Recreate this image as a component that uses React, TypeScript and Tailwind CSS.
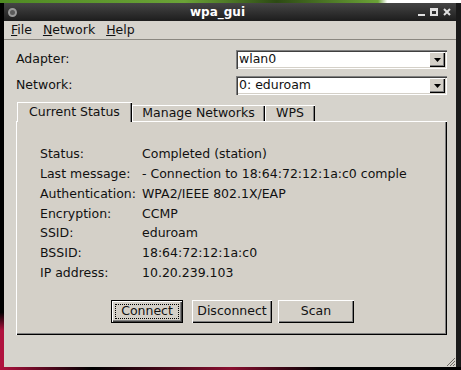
import { ReactNode } from "react";

const font = "font-['DejaVu_Sans','Liberation_Sans',sans-serif]";

const raised =
  "shadow-[inset_1px_1px_0_#ffffff,inset_-1px_-1px_0_#000000,inset_-2px_-2px_0_#808080]";
const sunken =
  "shadow-[inset_1px_1px_0_#808080,inset_2px_2px_0_#404040,inset_-1px_-1px_0_#ffffff,inset_-2px_-2px_0_#d4d0c8]";

const rows = [
  ["Status:", "Completed (station)"],
  ["Last message:", "- Connection to 18:64:72:12:1a:c0 comple"],
  ["Authentication:", "WPA2/IEEE 802.1X/EAP"],
  ["Encryption:", "CCMP"],
  ["SSID:", "eduroam"],
  ["BSSID:", "18:64:72:12:1a:c0"],
  ["IP address:", "10.20.239.103"],
];

function Combo({ value }: { value: string }) {
  return (
    <div className={`flex h-[19px] w-[211px] items-center bg-white p-[2px] ${sunken}`}>
      <span className="flex-1 pl-[1px] leading-none">{value}</span>
      <div className={`flex h-[15px] w-[16px] items-center justify-center bg-[#d4d0c8] ${raised}`}>
        <svg width="7" height="4" viewBox="0 0 7 4">
          <path d="M0 0h7L3.5 4z" fill="#000" />
        </svg>
      </div>
    </div>
  );
}

function Button({ children, w, main }: { children: ReactNode; w: string; main?: boolean }) {
  return (
    <div
      className={`flex h-[23px] ${w} items-center justify-center bg-[#d4d0c8] ${
        main
          ? "shadow-[inset_0_0_0_1px_#000,inset_2px_2px_0_#fff,inset_-2px_-2px_0_#404040,inset_-3px_-3px_0_#808080]"
          : raised
      }`}
    >
      {main ? (
        <span className="flex h-[15px] w-[64px] items-center justify-center border border-dotted border-black">
          {children}
        </span>
      ) : (
        children
      )}
    </div>
  );
}

function Tab({ label, active, w }: { label: string; active?: boolean; w: string }) {
  return (
    <div
      className={`flex ${w} items-center justify-center bg-[#d4d0c8] shadow-[inset_1px_1px_0_#ffffff,inset_-1px_0_0_#000000,inset_-2px_0_0_#808080] ${
        active ? "h-[20px] -mb-[1px] relative z-10" : "h-[16px]"
      }`}
    >
      {label}
    </div>
  );
}

export default function App() {
  return (
    <div className={`flex h-[370px] w-[461px] flex-col overflow-hidden bg-black text-[12.5px] text-[#111] ${font}`}>
      <div className="h-[3px] w-full bg-[linear-gradient(90deg,#4f8a23_0%,#6ba337_40%,#2d4a14_60%,#6ba337_82%,#ffffff_84%)]" />
      <div className="flex flex-1">
        <div className="w-[4px] bg-[linear-gradient(180deg,#000_0%,#000_85%,#b0123e_90%)]" />
        <div className="flex h-[364px] w-[452px] flex-col bg-[#d6d3cc]">
          {/* title bar */}
          <div className="flex h-[18px] items-center bg-[linear-gradient(180deg,#454545,#1d1d1d)] px-[4px] text-white">
            <div className="h-[9px] w-[9px] rounded-full border-2 border-[#9a9a9a] bg-[#5a5a5a]" />
            <div className="flex-1 text-center text-[12px] font-bold leading-none">wpa_gui</div>
            <div className="flex items-center gap-[5px] pr-[1px] text-[#e0e0e0]">
              <div className="mt-[5px] h-[2px] w-[7px] bg-[#e0e0e0]" />
              <div className="h-[8px] w-[8px] border-[2px] border-t-[3px] border-[#e0e0e0]" />
              <svg width="8" height="8" viewBox="0 0 8 8">
                <path d="M1 1l6 6M7 1L1 7" stroke="#e0e0e0" strokeWidth="2" />
              </svg>
            </div>
          </div>
          {/* menu */}
          <div className="flex h-[19px] items-center gap-[11px] border-b border-[#8a8780] pl-[7px] text-[12.5px]">
            <span>
              <span className="underline">F</span>ile
            </span>
            <span>
              <span className="underline">N</span>etwork
            </span>
            <span>
              <span className="underline">H</span>elp
            </span>
          </div>
          {/* body */}
          <div className="flex flex-1 flex-col pl-[12px] pr-[9px] pt-[10px]">
            <div className="flex items-center justify-between">
              <span>Adapter:</span>
              <Combo value="wlan0" />
            </div>
            <div className="mt-[7px] flex items-center justify-between">
              <span>Network:</span>
              <Combo value="0: eduroam" />
            </div>
            <div className="mt-[7px] flex items-end pl-[1px]">
              <Tab label="Current Status" active w="w-[115px]" />
              <Tab label="Manage Networks" w="w-[133px]" />
              <Tab label="WPS" w="w-[50px]" />
            </div>
            <div className={`flex h-[214px] w-[431px] flex-col bg-[#d4d0c8] pl-[24px] pt-[24px] ${raised}`}>
              {rows.map(([k, v]) => (
                <div key={k} className="flex h-[19.7px] items-center whitespace-nowrap">
                  <span className="w-[102px]">{k}</span>
                  <span>{v}</span>
                </div>
              ))}
              <div className="mt-[17px] flex pl-[71px]">
                <Button main w="w-[72px]">
                  Connect
                </Button>
                <div className="w-[9px]" />
                <Button w="w-[80px]">Disconnect</Button>
                <div className="w-[6px]" />
                <Button w="w-[76px]">Scan</Button>
              </div>
            </div>
            <div className="flex flex-1 items-end justify-end pb-[1px]">
              <svg width="9" height="9" viewBox="0 0 9 9" className="-mr-[8px]">
                <path d="M9 1L1 9M9 4L4 9M9 7L7 9" stroke="#6f6c66" strokeWidth="1" />
              </svg>
            </div>
          </div>
        </div>
        <div className="flex-1 bg-[#1a1a1a]" />
      </div>
      <div className="h-[3px] w-full bg-[linear-gradient(90deg,#b0123e_0%,#000_20%,#8a1030_50%,#000_70%,#000_100%)]" />
    </div>
  );
}
